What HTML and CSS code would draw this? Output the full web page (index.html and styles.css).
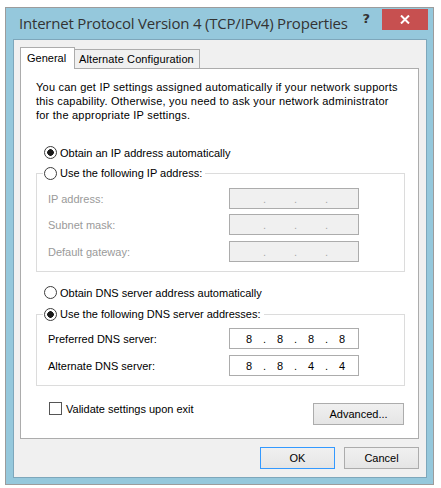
FILE: index.html
```html
<!DOCTYPE html>
<html>
<head>
<meta charset="utf-8">
<link rel="stylesheet" href="styles.css">
</head>
<body>
<div class="window">
  <div class="titlebar">
    <span class="title">Internet Protocol Version 4 (TCP/IPv4) Properties</span>
    <span class="help">?</span>
    <span class="close"><svg width="10" height="9" viewBox="0 0 10 9"><path d="M1 0.5 L9 8.5 M9 0.5 L1 8.5" stroke="#fff" stroke-width="2"/></svg></span>
  </div>
  <div class="client">
    <div class="tabs">
      <div class="tab active">General</div>
      <div class="tab">Alternate Configuration</div>
    </div>
    <div class="panel">
      <p class="desc">You can get IP settings assigned automatically if your network supports<br>this capability. Otherwise, you need to ask your network administrator<br>for the appropriate IP settings.</p>
      <div class="radio-row first"><span class="radio checked"></span><span>Obtain an IP address automatically</span></div>
      <fieldset class="group ip">
        <legend><span class="radio"></span><span>Use the following IP address:</span></legend>
        <div class="field-row disabled"><span class="label">IP address:</span><span class="ipbox"><span class="seg"></span><span class="dot">.</span><span class="seg"></span><span class="dot">.</span><span class="seg"></span><span class="dot">.</span><span class="seg"></span></span></div>
        <div class="field-row disabled"><span class="label">Subnet mask:</span><span class="ipbox"><span class="seg"></span><span class="dot">.</span><span class="seg"></span><span class="dot">.</span><span class="seg"></span><span class="dot">.</span><span class="seg"></span></span></div>
        <div class="field-row disabled last"><span class="label">Default gateway:</span><span class="ipbox"><span class="seg"></span><span class="dot">.</span><span class="seg"></span><span class="dot">.</span><span class="seg"></span><span class="dot">.</span><span class="seg"></span></span></div>
      </fieldset>
      <div class="radio-row dns-auto"><span class="radio"></span><span>Obtain DNS server address automatically</span></div>
      <fieldset class="group dns">
        <legend><span class="radio checked"></span><span>Use the following DNS server addresses:</span></legend>
        <div class="field-row"><span class="label">Preferred DNS server:</span><span class="ipbox"><span class="seg">8</span><span class="dot">.</span><span class="seg">8</span><span class="dot">.</span><span class="seg">8</span><span class="dot">.</span><span class="seg">8</span></span></div>
        <div class="field-row second"><span class="label">Alternate DNS server:</span><span class="ipbox"><span class="seg">8</span><span class="dot">.</span><span class="seg">8</span><span class="dot">.</span><span class="seg">4</span><span class="dot">.</span><span class="seg">4</span></span></div>
      </fieldset>
      <div class="bottom-row">
        <div class="check-row"><span class="checkbox"></span><span>Validate settings upon exit</span></div>
        <button class="btn advanced">Advanced...</button>
      </div>
    </div>
    <div class="buttons">
      <button class="btn default">OK</button>
      <button class="btn">Cancel</button>
    </div>
  </div>
</div>
</body>
</html>
```
FILE: styles.css
```css
html, body {
  margin: 0;
  padding: 0;
  background: #ffffff;
}
body {
  width: 441px;
  height: 488px;
  overflow: hidden;
  font-family: "Liberation Sans", Arial, sans-serif;
  font-size: 11px;
  color: #000;
}
.window {
  box-sizing: border-box;
  margin: 7px 0 0 5px;
  width: 429px;
  height: 478px;
  border: 1px solid #9c9c9c;
  background: #95c8dc;
  padding: 0 6px 6px 7px;
}
.titlebar {
  display: flex;
  align-items: flex-start;
  height: 31px;
}
.title {
  font-family: "Open Sans", "Noto Sans", sans-serif;
  font-size: 15px;
  color: #333333;
  margin: 5px 0 0 6px;
  line-height: 20px;
  letter-spacing: -0.2px;
  flex: 1;
}
.help {
  font-family: "DejaVu Sans", sans-serif;
  font-weight: bold;
  font-size: 13px;
  color: #333;
  margin: 3px 12px 0 0;
  line-height: 16px;
}
.close {
  display: flex;
  align-items: center;
  justify-content: center;
  width: 46px;
  height: 21px;
  margin: 1px -1px 0 0;
  background: #c75050;
}
.client {
  box-sizing: border-box;
  height: 439px;
  background: #f0f0f0;
  border: 1px solid #7ea7bb;
  padding: 7px 7px 7px 6px;
}
.tabs {
  display: flex;
  align-items: flex-end;
  height: 21px;
  position: relative;
  z-index: 1;
}
.tab {
  box-sizing: border-box;
  border: 1px solid #acacac;
  border-bottom: none;
  background: #f0f0f0;
  height: 19px;
  line-height: 18px;
  padding: 0 4px;
  margin-left: -1px;
  white-space: nowrap;
}
.tab.active {
  background: #fff;
  height: 22px;
  line-height: 20px;
  margin: 0 0 -1px 0;
  padding: 0 6px;
  width: 55px;
  position: relative;
  z-index: 2;
}
.tab:not(.active) {
  width: 126px;
  letter-spacing: 0.1px;
}
.panel {
  box-sizing: border-box;
  height: 371px;
  background: #fff;
  border: 1px solid #acacac;
  padding: 0 13px 0 15px;
}
.desc {
  margin: 11px 0 0 0;
  line-height: 14px;
  white-space: nowrap;
  letter-spacing: 0.22px;
}
.radio-row {
  display: flex;
  align-items: center;
  gap: 3px;
  height: 17px;
  padding-left: 8px;
}
.radio-row.first {
  margin-top: 22px;
}
.radio-row.dns-auto {
  margin-top: 12px;
}
.radio {
  box-sizing: border-box;
  display: inline-block;
  width: 13px;
  height: 13px;
  border: 1px solid #3c3c3c;
  border-radius: 50%;
  background: #fff;
  flex: none;
}
.radio.checked {
  background: radial-gradient(circle, #1b1b1b 0 3px, #fff 3.6px);
}
.group {
  box-sizing: border-box;
  width: 369px;
  margin: 4px 0 0 0;
  border: 1px solid #dcdcdc;
  padding: 6px 0 9px 11px;
  min-width: 0;
}
.group.dns {
  margin-top: 5px;
  padding-top: 5px;
}
.group legend {
  display: flex;
  align-items: center;
  gap: 3px;
  height: 17px;
  line-height: 17px;
  padding: 0 3px 0 1px;
  margin-left: -5px;
}
.field-row {
  display: flex;
  align-items: center;
  height: 21px;
  margin-top: 5px;
}
.field-row:first-of-type {
  margin-top: 0;
}
.field-row.last {
  margin-top: 6px;
}
.field-row.second {
  margin-top: 6px;
}
.label {
  width: 181px;
  flex: none;
}
.disabled .label {
  color: #9a9a9a;
}
.ipbox {
  box-sizing: border-box;
  display: flex;
  align-items: center;
  width: 130px;
  height: 21px;
  border: 1px solid #acacac;
  background: #fff;
  padding-left: 6px;
}
.disabled .ipbox {
  background: #f0f0f0;
  color: #a8a8a8;
}
.seg {
  width: 26px;
  text-align: center;
}
.dot {
  width: 5px;
  text-align: center;
}
.bottom-row {
  display: flex;
  justify-content: space-between;
  align-items: flex-start;
  margin-top: 16px;
  padding-right: 1px;
}
.check-row {
  display: flex;
  align-items: center;
  gap: 4px;
  height: 13px;
  margin-left: 13px;
}
.checkbox {
  box-sizing: border-box;
  display: inline-block;
  width: 13px;
  height: 13px;
  border: 1px solid #555;
  background: #fff;
}
.btn {
  box-sizing: border-box;
  font-family: "Liberation Sans", Arial, sans-serif;
  font-size: 11px;
  color: #000;
  height: 22px;
  border: 1px solid #acacac;
  background: linear-gradient(#f0f0f0, #e5e5e5);
  padding: 0;
  margin: 0;
}
.btn.advanced {
  width: 91px;
  margin-top: 1px;
}
.buttons {
  display: flex;
  justify-content: flex-end;
  gap: 9px;
  margin-top: 8px;
}
.buttons .btn {
  width: 75px;
}
.btn.default {
  border-color: #3399ff;
}
```
